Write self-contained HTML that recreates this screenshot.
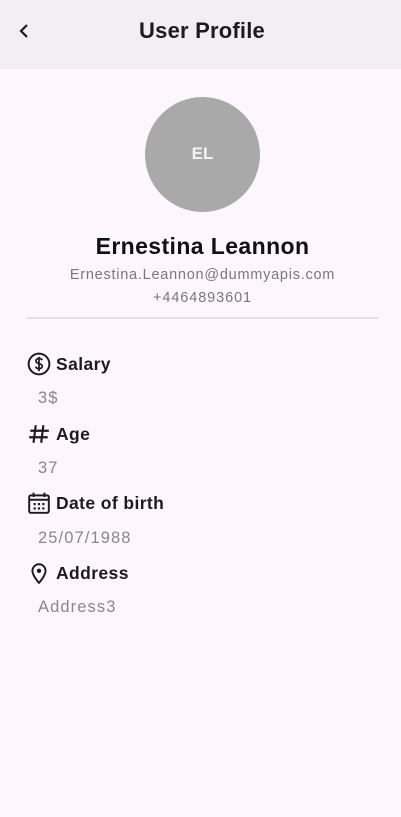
<!DOCTYPE html><html><head><style>
body{margin:0;width:401px;height:817px;background:#fdf7fd;font-family:"Liberation Sans",sans-serif;position:relative;overflow:hidden}
.bar{position:absolute;left:0;top:0;width:401px;height:69px;background:#f3eef4}
.t{position:absolute;white-space:nowrap}
.lab{position:absolute;left:56px;font-size:17.5px;font-weight:bold;color:#1d1b20;line-height:20px;letter-spacing:0.4px}
.val{position:absolute;left:38px;font-size:16.5px;color:#8a878c;line-height:20px;letter-spacing:1.1px}
svg.i{position:absolute;left:27px}
</style></head><body>
<div class="bar"></div>
<svg style="position:absolute;left:16px;top:22px" width="16" height="18" viewBox="0 0 16 18"><path d="M11 3L5 9l6 6" fill="none" stroke="#1d1b20" stroke-width="2.2"/></svg>
<div class="t" style="left:0;width:404px;text-align:center;top:18px;font-size:22px;font-weight:bold;color:#1d1b20;line-height:26px;letter-spacing:0.2px">User Profile</div>
<div style="position:absolute;left:145px;top:97px;width:115px;height:115px;border-radius:50%;background:#a9a9a9"></div>
<div class="t" style="left:145px;width:115px;text-align:center;top:144px;font-size:17px;font-weight:bold;color:#f4f4f4;line-height:20px">EL</div>
<div class="t" style="left:0;width:405px;text-align:center;top:232px;font-size:23px;font-weight:bold;color:#111;line-height:28px;letter-spacing:0.4px">Ernestina Leannon</div>
<div class="t" style="left:0;width:405px;text-align:center;top:266px;font-size:14.5px;color:#7a777c;line-height:18px;letter-spacing:0.75px">Ernestina.Leannon@dummyapis.com</div>
<div class="t" style="left:0;width:405px;text-align:center;top:289px;font-size:14.5px;color:#7a777c;line-height:18px;letter-spacing:0.9px">+4464893601</div>
<div style="position:absolute;left:27px;top:317px;width:351px;height:2px;background:#e2dfe3"></div>

<svg class="i" style="top:352px" width="24" height="24" viewBox="0 0 22 22"><circle cx="11" cy="11" r="9.5" fill="none" stroke="#1d1b20" stroke-width="1.8"/><path d="M14 7.5c-.5-1-1.6-1.5-3-1.5-1.7 0-2.8.9-2.8 2.2 0 3 5.8 1.8 5.8 4.8 0 1.3-1.2 2.3-3 2.3-1.5 0-2.7-.7-3.1-1.8M11 4.5v13" fill="none" stroke="#1d1b20" stroke-width="1.6"/></svg>
<div class="lab" style="top:354px">Salary</div>
<div class="val" style="top:388px">3$</div>

<svg class="i" style="top:422px" width="24" height="24" viewBox="0 0 22 22"><path d="M8 3L6 19M15 3L13 19M3 8h17M2 14h17" fill="none" stroke="#1d1b20" stroke-width="2"/></svg>
<div class="lab" style="top:424px">Age</div>
<div class="val" style="top:458px">37</div>

<svg class="i" style="top:491px" width="24" height="24" viewBox="0 0 22 22"><rect x="2" y="4" width="18" height="16" rx="1.5" fill="none" stroke="#1d1b20" stroke-width="1.8"/><path d="M2 8h18M6 1.5v4M16 1.5v4" stroke="#1d1b20" stroke-width="1.8"/><g fill="#1d1b20"><rect x="6" y="11" width="2" height="2"/><rect x="10" y="11" width="2" height="2"/><rect x="14" y="11" width="2" height="2"/><rect x="6" y="15" width="2" height="2"/><rect x="10" y="15" width="2" height="2"/><rect x="14" y="15" width="2" height="2"/></g></svg>
<div class="lab" style="top:493px">Date of birth</div>
<div class="val" style="top:528px">25/07/1988</div>

<svg class="i" style="top:561px" width="24" height="24" viewBox="0 0 22 22"><path d="M11 20s-6-6.5-6-11a6 6 0 0 1 12 0c0 4.5-6 11-6 11z" fill="none" stroke="#1d1b20" stroke-width="1.8"/><circle cx="11" cy="9" r="2" fill="#1d1b20"/></svg>
<div class="lab" style="top:563px">Address</div>
<div class="val" style="top:597px">Address3</div>
</body></html>
